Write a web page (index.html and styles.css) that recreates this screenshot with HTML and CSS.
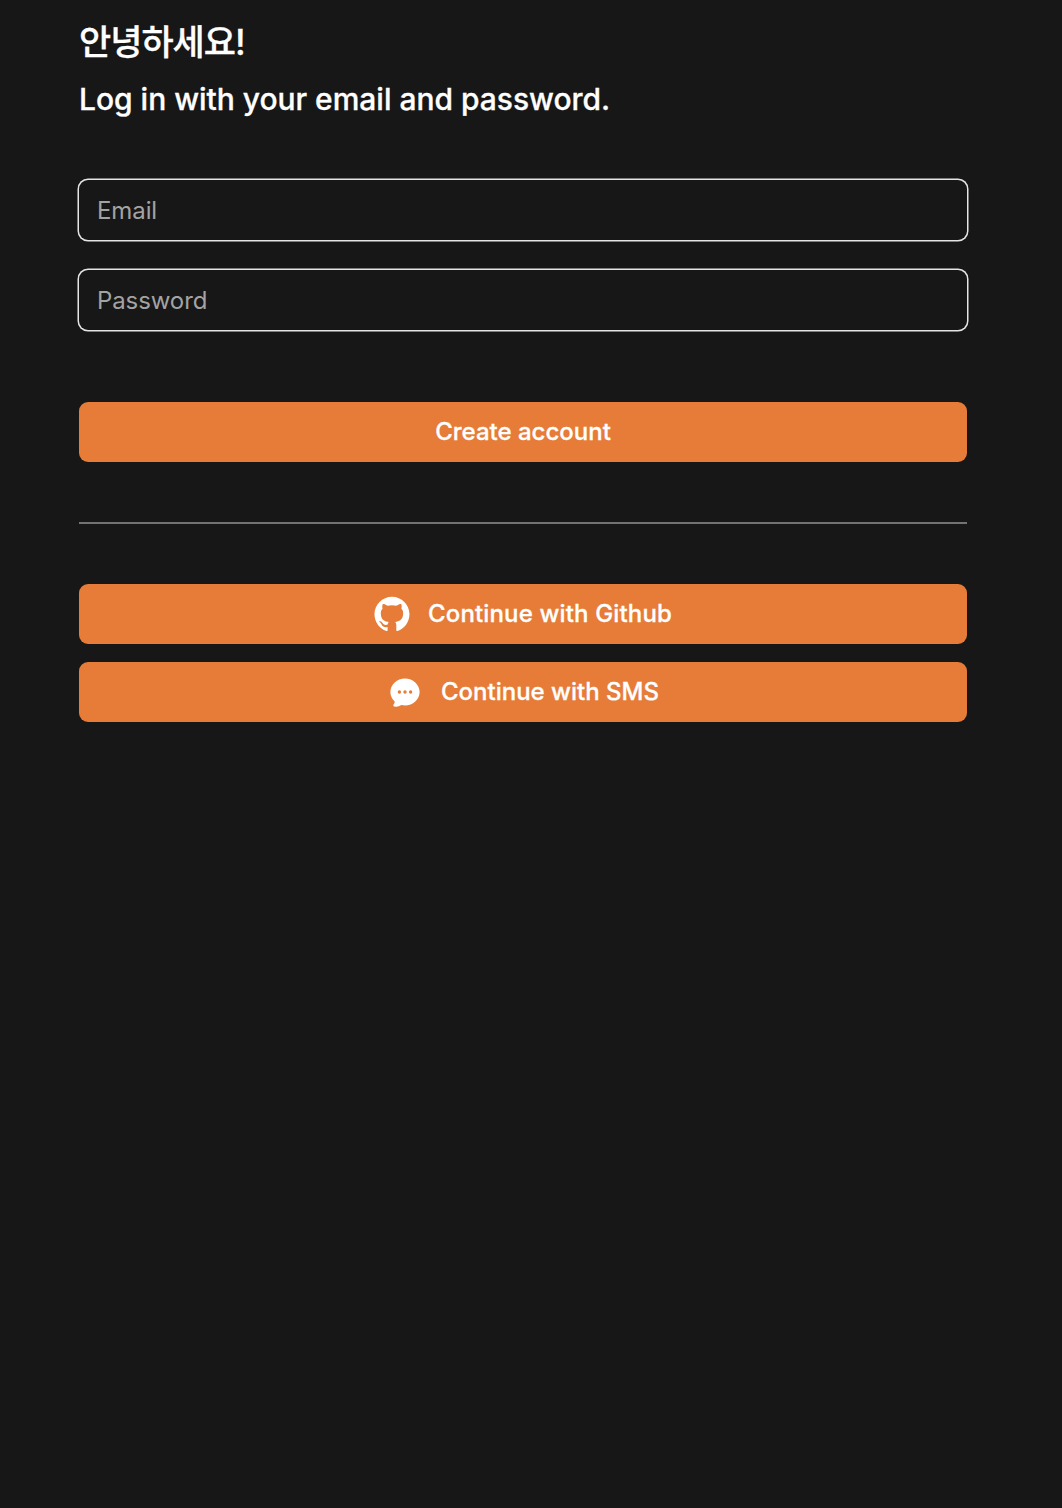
FILE: index.html
```html
<!DOCTYPE html>
<html lang="en">
<head>
    <meta charset="UTF-8">
    <meta name="viewport" content="width=device-width, initial-scale=1.0">
    <title>Log in</title>
    <link rel="stylesheet" href="styles.css">
</head>
<body>

<main class="page">
    <!-- Heading -->
    <header class="intro">
        <h1 lang="ko">안녕하세요!</h1>
        <h2>Log in with your email and password.</h2>
    </header>

    <!-- Login Form -->
    <form class="login-form">
        <input type="email" class="field" placeholder="Email" aria-label="Email">
        <input type="password" class="field" placeholder="Password" aria-label="Password">
        <button type="submit" class="btn submit">Create account</button>
    </form>

    <div class="divider"></div>

    <!-- Social Login -->
    <div class="social">
        <a class="btn github" href="#">
            <svg class="icon" viewBox="-1.3 -1.3 100.4 99.4" fill="currentColor" aria-hidden="true">
                <path fill-rule="evenodd" clip-rule="evenodd" d="M48.854 0C21.839 0 0 22 0 49.217c0 21.756 13.993 40.172 33.405 46.69 2.427.49 3.316-1.059 3.316-2.362 0-1.141-.08-5.052-.08-9.127-13.59 2.934-16.42-5.867-16.42-5.867-2.184-5.704-5.42-7.17-5.42-7.17-4.448-3.015.324-3.015.324-3.015 4.934.326 7.523 5.052 7.523 5.052 4.367 7.496 11.404 5.378 14.235 4.074.404-3.178 1.699-5.378 3.074-6.6-10.839-1.141-22.243-5.378-22.243-24.283 0-5.378 1.94-9.778 5.014-13.2-.485-1.222-2.184-6.275.486-13.038 0 0 4.125-1.304 13.426 5.052a46.97 46.97 0 0 1 12.214-1.63c4.125 0 8.33.571 12.213 1.63 9.302-6.356 13.427-5.052 13.427-5.052 2.67 6.763.97 11.816.485 13.038 3.155 3.422 5.015 7.822 5.015 13.2 0 18.905-11.404 23.06-22.324 24.283 1.78 1.548 3.316 4.481 3.316 9.126 0 6.6-.08 11.897-.08 13.526 0 1.304.89 2.853 3.316 2.364 19.412-6.52 33.405-24.935 33.405-46.691C97.707 22 75.788 0 48.854 0z"/>
            </svg>
            <span>Continue with Github</span>
        </a>
        <a class="btn" href="#">
            <svg class="icon" viewBox="0 0 24 24" fill="currentColor" aria-hidden="true">
                <path fill-rule="evenodd" clip-rule="evenodd" d="M4.804 21.644A6.707 6.707 0 0 0 6 21.75a6.721 6.721 0 0 0 3.583-1.029c.774.182 1.584.279 2.417.279 5.322 0 9.75-3.97 9.75-9 0-5.03-4.428-9-9.75-9s-9.75 3.97-9.75 9c0 2.409 1.025 4.587 2.674 6.192.232.226.277.428.254.543a3.73 3.73 0 0 1-.814 1.686.75.75 0 0 0 .44 1.223ZM8.25 10.875a1.125 1.125 0 1 0 0 2.25 1.125 1.125 0 0 0 0-2.25ZM10.875 12a1.125 1.125 0 1 1 2.25 0 1.125 1.125 0 0 1-2.25 0Zm4.875-1.125a1.125 1.125 0 1 0 0 2.25 1.125 1.125 0 0 0 0-2.25Z"/>
            </svg>
            <span>Continue with SMS</span>
        </a>
    </div>
</main>

</body>
</html>
```
FILE: styles.css
```css
* {
    box-sizing: border-box;
    margin: 0;
}
body {
    min-height: 100vh;
    background: #171717;
    color: #fff;
    font-family: Inter, "Noto Sans CJK KR", sans-serif;
    font-size: 24px;
}
.page {
    width: 888px;
    margin-left: 79px;
    padding-top: 18px;
}
.intro {
    display: flex;
    flex-direction: column;
    gap: 12px;
}
h1, h2 {
    font-weight: 500;
}
h1 {
    font-size: 35px;
    line-height: 48px;
    letter-spacing: -1px;
    -webkit-text-stroke: 0.3px #fff;
}
h2 {
    font-size: 30px;
    line-height: 42px;
    letter-spacing: -0.02px;
    -webkit-text-stroke: 0.3px #fff;
}
.login-form {
    display: flex;
    flex-direction: column;
    gap: 30px;
    margin-top: 60px;
}
.field {
    width: 100%;
    height: 60px;
    padding: 0 18px;
    border: none;
    border-radius: 9px;
    outline: none;
    background: transparent;
    box-shadow: 0 0 0 1.5px #e5e5e5;
    color: #fff;
    font: inherit;
    letter-spacing: -0.1px;
}
.field::placeholder {
    color: #a3a3a3;
}
.btn {
    display: flex;
    align-items: center;
    justify-content: center;
    gap: 18px;
    width: 100%;
    height: 60px;
    border: none;
    border-radius: 9px;
    background: #e67c37;
    color: #fff;
    font: inherit;
    font-weight: 500;
    text-decoration: none;
    -webkit-text-stroke: 0.3px #fff;
    cursor: pointer;
}
.btn span {
    padding-bottom: 2px;
}
.github {
    letter-spacing: 0.15px;
}
.submit {
    margin-top: 42px;
    padding-bottom: 3px;
}
.divider {
    height: 2px;
    margin: 60px 0;
    background: #737373;
}
.social {
    display: flex;
    flex-direction: column;
    gap: 18px;
}
.icon {
    width: 36px;
    height: 36px;
}
```
